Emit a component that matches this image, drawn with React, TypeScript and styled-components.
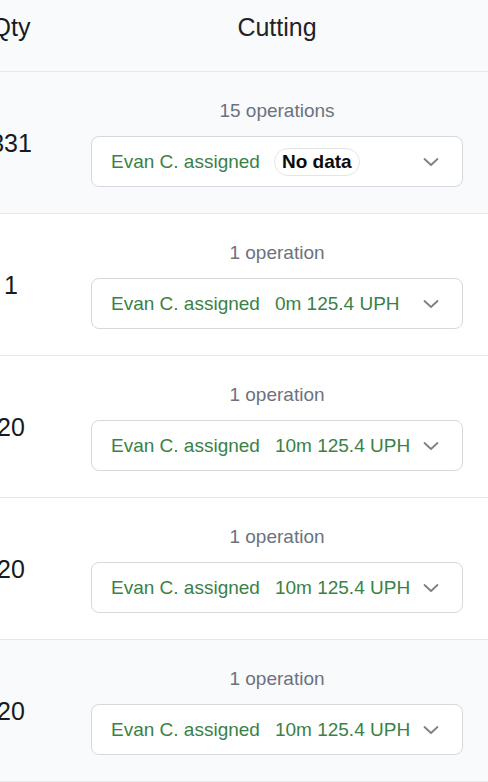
import React from "react";
import styled, { createGlobalStyle } from "styled-components";

type Job = {
  qty: string;
  ops: string;
  stats?: string;
  shaded?: boolean;
};

const jobs: Job[] = [
  { qty: "331", ops: "15 operations", shaded: true },
  { qty: "1", ops: "1 operation", stats: "0m 125.4 UPH" },
  { qty: "20", ops: "1 operation", stats: "10m 125.4 UPH" },
  { qty: "20", ops: "1 operation", stats: "10m 125.4 UPH" },
  { qty: "20", ops: "1 operation", stats: "10m 125.4 UPH", shaded: true },
];

const Chevron = () => (
  <svg width="16" height="16" viewBox="0 0 16 16" fill="none">
    <polyline
      points="1.5,5 8,11 14.5,5"
      stroke="#7d7f83"
      strokeWidth="1.8"
      strokeLinecap="round"
      strokeLinejoin="round"
    />
  </svg>
);

const App = () => {
  return (
    <Table>
      <GlobalStyle />
      <HeaderRow>
        <QtyCell>Qty</QtyCell>
        <HeadCell>Cutting</HeadCell>
      </HeaderRow>
      {jobs.map((job, i) => (
        <Row key={i} $shaded={job.shaded}>
          <QtyCell>{job.qty}</QtyCell>
          <CuttingCell>
            <Ops>{job.ops}</Ops>
            <Select>
              <Assigned>Evan C. assigned</Assigned>
              {job.stats ? <Stats>{job.stats}</Stats> : <Badge>No data</Badge>}
              <Caret>
                <Chevron />
              </Caret>
            </Select>
          </CuttingCell>
        </Row>
      ))}
    </Table>
  );
};

export default App;

const GlobalStyle = createGlobalStyle`
  html, body {
    margin: 0;
    padding: 0;
    overflow: hidden;
    background: #ffffff;
  }
  body {
    font-family: "Liberation Sans", Arial, Helvetica, sans-serif;
    color: #111827;
  }
`;

const Table = styled.div`
  width: 532px;
`;

const HeaderRow = styled.div`
  display: grid;
  grid-template-columns: 22px 510px;
  height: 72px;
  padding-top: 12px;
  box-sizing: border-box;
  background: #f9fafb;
  border-bottom: 1px solid #e5e7eb;
  font-size: 25px;
  line-height: 30px;
  color: #1f2329;
  align-items: start;
`;

const HeadCell = styled.div`
  text-align: center;
`;

const Row = styled.div<{ $shaded?: boolean }>`
  display: grid;
  grid-template-columns: 22px 510px;
  align-items: center;
  background: ${(p) => (p.$shaded ? "#f9fafb" : "#ffffff")};
  border-bottom: 1px solid #e5e7eb;
  font-size: 25px;
  line-height: 30px;
`;

const QtyCell = styled.div`
  display: flex;
  justify-content: center;
  white-space: nowrap;
  color: #161a22;
`;

const CuttingCell = styled.div`
  display: flex;
  flex-direction: column;
  align-items: center;
  padding: 27px 0 26px;
`;

const Ops = styled.div`
  font-size: 19px;
  line-height: 24px;
  color: #6b7280;
  margin-bottom: 13px;
`;

const Select = styled.div`
  display: flex;
  align-items: center;
  box-sizing: border-box;
  width: 372px;
  height: 51px;
  padding: 0 23px 0 19px;
  background: #ffffff;
  border: 1px solid #d5d8dd;
  border-radius: 8px;
  font-size: 19px;
  line-height: 24px;
  color: #3a8147;
  white-space: nowrap;
`;

const Assigned = styled.span``;

const Stats = styled.span`
  margin-left: 15px;
`;

const Badge = styled.span`
  margin-left: 14px;
  padding: 1px 7px;
  border: 1px solid #e3e5e8;
  border-radius: 14px;
  font-weight: 700;
  color: #0b0b0c;
`;

const Caret = styled.span`
  display: flex;
  margin-left: auto;
`;
